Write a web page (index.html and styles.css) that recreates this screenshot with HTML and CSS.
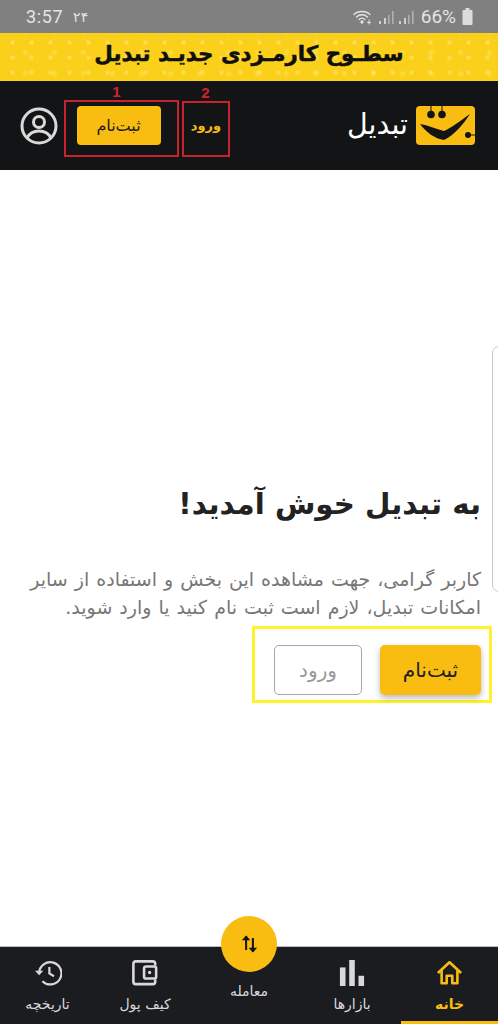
FILE: index.html
```html
<!DOCTYPE html>
<html lang="fa">
<head>
<meta charset="utf-8">
<title>تبدیل</title>
<link rel="stylesheet" href="styles.css">
</head>
<body>
<div class="app">
  <div class="status">
    <div class="status-left"><span class="clock">3:57</span><span class="date">۲۴</span></div>
    <div class="status-right">
      <svg class="wifi" width="20" height="16" viewBox="0 0 20 16" fill="none" stroke="#e4e4e4" stroke-width="1.3" stroke-linecap="round"><path d="M1 5.5C5 1.5 13 1.5 17 5.5"/><path d="M3.5 8C6.5 5 11.5 5 14.5 8"/><path d="M6 10.5C7.8 8.8 10.2 8.8 12 10.5"/><circle cx="9" cy="13" r="1" fill="#e4e4e4"/><path d="M16 11v4M14.5 13.5h3" stroke-width="1"/></svg>
      <svg width="17" height="16" viewBox="0 0 17 16" fill="#d0d0d0"><rect x="1" y="12" width="2" height="3"/><rect x="6" y="9" width="2" height="6"/><rect x="10" y="6" width="1.6" height="9" opacity=".6"/><rect x="14" y="2" width="1.6" height="13" opacity=".6"/></svg>
      <svg width="17" height="16" viewBox="0 0 17 16" fill="#d0d0d0"><rect x="1" y="12" width="2" height="3"/><rect x="6" y="9" width="2" height="6"/><rect x="10" y="6" width="1.6" height="9" opacity=".6"/><rect x="14" y="2" width="1.6" height="13" opacity=".6"/></svg>
      <span class="percent">66%</span>
      <svg width="11" height="17" viewBox="0 0 11 17" fill="#dcdcdc"><rect x="3.5" y="0" width="4" height="2"/><rect x="0.5" y="2" width="10" height="15" rx="1"/></svg>
    </div>
  </div>

  <div class="banner"><span class="banner-text">سطـوح کارمـزدی جدیـد تبدیل</span></div>

  <header class="topbar">
    <div class="top-actions">
      <svg class="avatar" width="38" height="38" viewBox="0 0 38 38" fill="none" stroke="#d9d9d9" stroke-width="3"><circle cx="19" cy="19" r="17"/><circle cx="19" cy="15" r="5.5"/><path d="M7 31C10 25 14 24 19 24S28 25 31 31"/></svg>
      <div class="mark-box mark-register">
        <span class="mark-num">1</span>
        <a class="top-register">ثبت‌نام</a>
      </div>
      <div class="mark-box mark-login">
        <span class="mark-num">2</span>
        <a class="top-login">ورود</a>
      </div>
    </div>
    <div class="brand">
      <span class="brand-name">تبدیل</span>
      <svg class="brand-mark" width="60" height="39" viewBox="0 0 60 39">
        <rect width="59" height="39" rx="4" fill="#f9bc11"/>
        <path d="M15 0V7M26 0V7M52 29H60" stroke="#131416" stroke-width="1" fill="none"/>
        <circle cx="15" cy="8.5" r="3.8" fill="#131416"/>
        <circle cx="26" cy="8.5" r="3.8" fill="#131416"/>
        <circle cx="52" cy="29" r="3" fill="#131416"/>
        <path d="M4 18C12 19 20 23 28 25C35 22 44 15 54 8C47 19 38 29 28 34C19 33 10 26 4 18Z" fill="#131416"/>
      </svg>
    </div>
  </header>

  <main class="content">
    <div class="side-tab"></div>
    <h1 class="title">به تبدیل خوش آمدید!</h1>
    <p class="lead">کاربر گرامی، جهت مشاهده این بخش و استفاده از سایر امکانات تبدیل، لازم است ثبت نام کنید یا وارد شوید.</p>
    <div class="cta">
      <a class="btn btn-primary">ثبت‌نام</a>
      <a class="btn btn-ghost">ورود</a>
    </div>
  </main>

  <nav class="tabs">
    <a class="tab tab-active">
      <svg width="27" height="26" viewBox="0 0 28 28" fill="none" stroke="#f9bc11" stroke-width="2.8" stroke-linejoin="round"><path d="M1.5 14L14 2.5L26.5 14"/><path d="M5.5 11V25H11V17H17V25H22.5V11"/></svg>
      <span>خانه</span>
    </a>
    <a class="tab">
      <svg width="26" height="26" viewBox="0 0 28 28" fill="#d9d9dc"><rect x="1" y="8" width="6" height="20"/><rect x="11" y="0" width="6" height="28"/><rect x="21" y="17" width="6" height="11"/></svg>
      <span>بازارها</span>
    </a>
    <a class="tab tab-trade">
      <span>معامله</span>
    </a>
    <a class="tab">
      <svg width="26" height="26" viewBox="0 0 28 28" fill="none" stroke="#d9d9dc" stroke-width="2.8"><path d="M25 6V4C25 2.5 24 1.5 22.5 1.5H4C2.5 1.5 1.5 2.5 1.5 4V23.5C1.5 25 2.5 26 4 26H22.5C24 26 25 25 25 23.5V21"/><rect x="13" y="7" width="13" height="13" rx="2"/><circle cx="19" cy="13.5" r="1.8" fill="#d9d9dc" stroke="none"/></svg>
      <span>کیف پول</span>
    </a>
    <a class="tab">
      <svg width="29" height="26" viewBox="0 0 30 28" fill="none" stroke="#d9d9dc" stroke-width="2.4"><path d="M6 14A12 12 0 1 1 9.5 22.8"/><path d="M1.5 11.5L6 16.5L10.5 11.5" fill="#d9d9dc" stroke="none"/><path d="M17 7.5V14.5L22 17.5"/></svg>
      <span>تاریخچه</span>
    </a>
    <a class="fab">
      <svg width="17" height="22" viewBox="0 0 20 24" fill="none" stroke="#131416" stroke-width="2.4"><path d="M6 19V3"/><path d="M1 7.5L6 2L11 7.5" stroke="none" fill="#131416"/><path d="M14 5V21"/><path d="M9 16.5L14 22L19 16.5" stroke="none" fill="#131416"/></svg>
    </a>
  </nav>
</div>
</body>
</html>
```
FILE: styles.css
```css
* { box-sizing: border-box; }
html, body { margin: 0; padding: 0; }
body {
  font-family: "DejaVu Sans", "Noto Sans", sans-serif;
  background: #fff;
}
.app {
  position: relative;
  width: 498px;
  height: 1024px;
  overflow: hidden;
  display: flex;
  flex-direction: column;
}
.status {
  height: 33px;
  background: #808080;
  display: flex;
  justify-content: space-between;
  align-items: center;
  padding: 0 25px 0 26px;
  color: #e4e4e4;
}
.status-left { display: flex; align-items: center; gap: 10px; }
.clock { font: 18px/1 "Roboto", sans-serif; letter-spacing: .6px; }
.date { font-size: 14px; line-height: 1; }
.status-right { display: flex; align-items: center; gap: 3px; }
.wifi { margin-right: 2px; }
.percent { font: 19px/1 "Roboto", sans-serif; margin: 0 3px; }
.banner {
  height: 48px;
  background-color: #fbd01a;
  background-image:
    radial-gradient(circle, rgba(255,240,170,.4) 1.2px, transparent 3px),
    radial-gradient(circle, rgba(255,235,130,.35) 1.5px, transparent 3.5px);
  background-size: 19px 15px, 29px 21px;
  background-position: 3px 2px, 11px 9px;
  display: flex;
  align-items: center;
  justify-content: center;
}
.banner-text {
  direction: rtl;
  font-size: 21.4px;
  font-weight: 700;
  color: #0f0f0f;
  -webkit-text-stroke: .5px #0f0f0f;
  line-height: 1;
  transform: translateY(-3px);
}
.topbar {
  height: 89px;
  background: #131416;
  display: flex;
  justify-content: space-between;
  align-items: center;
  padding: 0 22px 0 20px;
}
.top-actions { display: flex; align-items: center; }
.avatar { margin-right: 6px; }
.mark-box {
  position: relative;
  height: 57px;
  margin-top: 6px;
  padding-bottom: 6px;
  border: 2px solid #c8222c;
  display: flex;
  align-items: center;
  justify-content: center;
}
.mark-register { width: 115px; padding-right: 6px; }
.mark-login { width: 48px; margin-left: 3px; height: 56px; padding-bottom: 6px; }
.mark-num {
  position: absolute;
  top: -19px;
  left: 0;
  right: 10px;
  text-align: center;
  color: #d3222c;
  font: 700 15px/17px "Liberation Sans", sans-serif;
}
.mark-login .mark-num { right: 1px; }
.top-register {
  width: 84px;
  height: 39px;
  background: #f9bc11;
  border-radius: 4px;
  display: flex;
  align-items: center;
  justify-content: center;
  color: #1a1a1a;
  font-size: 16px;
}
.top-login { color: #f9bc11; font-size: 13px; font-weight: 700; }
.brand { display: flex; align-items: center; gap: 8px; }
.brand-name { color: #fff; font-size: 28.5px; line-height: 1; direction: rtl; }
.content {
  position: relative;
  flex: 1;
  background: #fff;
  direction: rtl;
  padding: 312px 17px 0 14px;
}
.side-tab {
  position: absolute;
  right: -8px;
  top: 176px;
  width: 14px;
  height: 246px;
  border: 1px solid #c9c9c9;
  border-radius: 7px;
  background: #fff;
}
.title {
  margin: 0;
  font-size: 29.3px;
  line-height: 44px;
  font-weight: 700;
  color: #222;
}
.lead {
  margin: 39px 0 0;
  font-size: 19px;
  word-spacing: 1px;
  line-height: 28px;
  color: #777;
}
.cta {
  position: absolute;
  top: 456px;
  left: 252px;
  width: 240px;
  height: 77px;
  border: 3px solid #fff22a;
  display: flex;
  align-items: center;
  justify-content: flex-start;
  gap: 18px;
  padding: 11px 8px 0 0;
}
.btn {
  height: 50px;
  border-radius: 5px;
  display: flex;
  align-items: center;
  justify-content: center;
  font-size: 20px;
}
.btn-primary {
  width: 101px;
  background: #f9bc11;
  color: #222;
  box-shadow: 0 3px 6px rgba(0,0,0,.28);
}
.btn-ghost {
  width: 88px;
  background: #fff;
  color: #999;
  border: 1px solid #a8a8a8;
}
.tabs {
  position: relative;
  height: 78px;
  background: #1b1c20;
  border-top: 1px solid #bdbdbd;
  display: grid;
  grid-template-columns: 97px 98px 108px 100px 95px;
  direction: rtl;
  color: #d9d9dc;
}
.tab {
  display: flex;
  flex-direction: column;
  align-items: center;
  padding-top: 13px;
  gap: 9px;
  font-size: 14px;
  line-height: 18px;
}
.tab svg { display: block; }
.tab-active {
  color: #f9bc11;
  font-weight: 700;
  border-bottom: 3px solid #f9bc11;
}
.tab-trade { padding-top: 35px; }
.fab {
  position: absolute;
  left: 221px;
  top: -31px;
  width: 56px;
  height: 56px;
  border-radius: 50%;
  background: #f9bc11;
  display: flex;
  align-items: center;
  justify-content: center;
}
```
